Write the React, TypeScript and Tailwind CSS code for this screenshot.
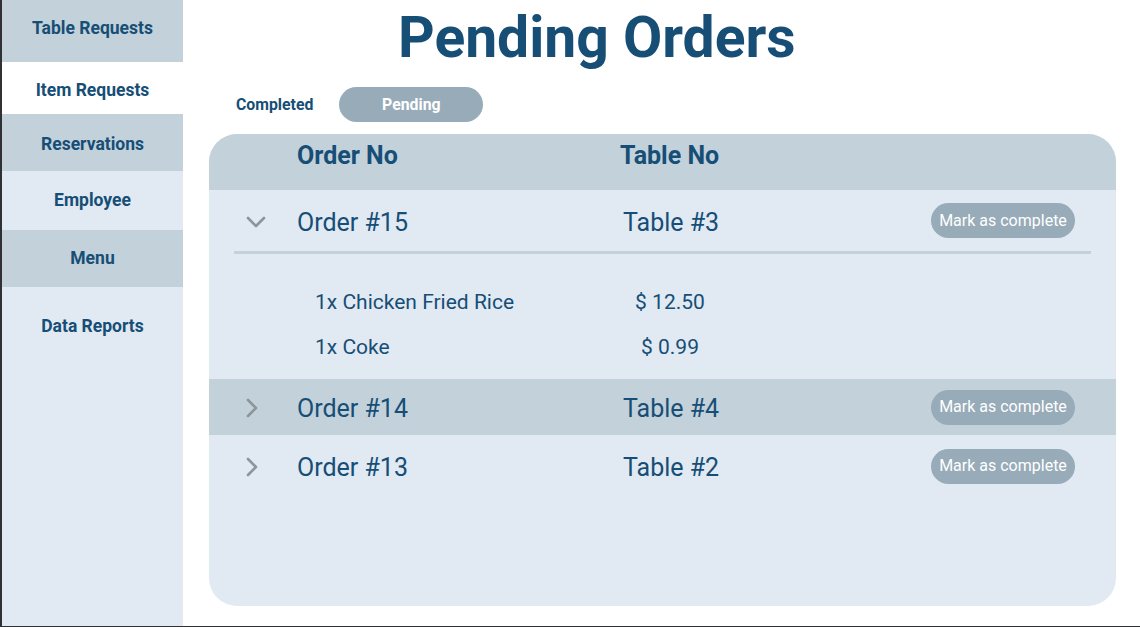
import React from "react";

const navy = "text-[#164e76]";

const nav = [
  { label: "Table Requests", h: "h-[62px]", bg: "bg-[#c3d1da]", pad: "pb-[6px]" },
  { label: "Item Requests", h: "h-[52px]", bg: "bg-white", pad: "pt-[4px]" },
  { label: "Reservations", h: "h-[57px]", bg: "bg-[#c3d1da]", pad: "pt-[3px]" },
  { label: "Employee", h: "h-[59px]", bg: "bg-[#e1e9f3]", pad: "" },
  { label: "Menu", h: "h-[57px]", bg: "bg-[#c3d1da]", pad: "" },
];

function ChevronDown() {
  return (
    <svg width="20" height="12" viewBox="0 0 20 12" fill="none" stroke="#8c959c" strokeWidth="2.6" strokeLinecap="round" strokeLinejoin="round">
      <path d="M2 2l8 8 8-8" />
    </svg>
  );
}

function ChevronRight() {
  return (
    <svg width="12" height="20" viewBox="0 0 12 20" fill="none" stroke="#8c959c" strokeWidth="2.6" strokeLinecap="round" strokeLinejoin="round">
      <path d="M2 2l8 8-8 8" />
    </svg>
  );
}

function CompleteButton() {
  return (
    <button className="h-[35px] w-[144px] rounded-full bg-[#97abb9] text-white text-[16px] leading-none">
      Mark as complete
    </button>
  );
}

function OrderRow({
  order,
  table,
  open,
  bg,
  h,
}: {
  order: string;
  table: string;
  open?: boolean;
  bg: string;
  h: string;
}) {
  return (
    <div className={`flex items-center ${h} ${bg}`}>
      <div className="w-[88px] pl-[37px] pt-[2px] flex items-center">
        {open ? <ChevronDown /> : <ChevronRight />}
      </div>
      <div className={`w-[326px] pt-[4px] text-[25px] ${navy}`}>{order}</div>
      <div className={`flex-1 pt-[4px] text-[25px] ${navy}`}>{table}</div>
      <div className="pr-[41px]">
        <CompleteButton />
      </div>
    </div>
  );
}

export default function App() {
  return (
    <div
      className="h-[627px] w-[1140px] flex bg-white border-l-2 border-b border-[#2f3135] overflow-hidden"
      style={{ fontFamily: "Roboto, 'Noto Sans', sans-serif" }}
    >
      {/* Sidebar */}
      <aside className="w-[181px] flex flex-col bg-[#e1e9f3]">
        {nav.map((n) => (
          <div key={n.label} className={`${n.h} ${n.bg} ${n.pad} flex items-center justify-center font-bold text-[17.5px] ${navy}`}>
            {n.label}
          </div>
        ))}
        <div className={`pt-[26px] text-center font-bold text-[17.5px] ${navy}`}>Data Reports</div>
      </aside>

      {/* Main */}
      <main className="flex-1 flex flex-col">
        <h1 className={`mt-[6px] pl-[215px] text-[57px] leading-[64px] font-bold ${navy}`}>Pending Orders</h1>

        <div className="mt-[17px] flex items-center pl-[53px] gap-[26px]">
          <span className={`font-bold text-[15.8px] ${navy}`}>Completed</span>
          <span className="h-[35px] w-[144px] rounded-full bg-[#97abb9] flex items-center justify-center font-bold text-[15.8px] text-white">
            Pending
          </span>
        </div>

        <section className="mt-[12px] ml-[26px] mr-[24px] h-[472px] rounded-[28px] bg-[#e1e9f3] overflow-hidden">
          <div className="h-[56px] flex items-start pt-[7px] bg-[#c3d1da] font-bold text-[25px] leading-[30px]">
            <div className={`pl-[88px] w-[411px] ${navy}`}>Order No</div>
            <div className={navy}>Table No</div>
          </div>

          <OrderRow order="Order #15" table="Table #3" open bg="bg-[#e1e9f3]" h="h-[61px]" />
          <div className="mx-[25px] h-[3px] bg-[#c3d1da]" />

          <div className={`pt-[36px] pb-[19px] flex flex-col gap-[20px] text-[21px] leading-[25px] ${navy}`}>
            <div className="flex">
              <div className="pl-[106px] w-[376px]">1x Chicken Fried Rice</div>
              <div className="w-[170px] text-center">$ 12.50</div>
            </div>
            <div className="flex">
              <div className="pl-[106px] w-[376px]">1x Coke</div>
              <div className="w-[170px] text-center">$ 0.99</div>
            </div>
          </div>

          <OrderRow order="Order #14" table="Table #4" bg="bg-[#c3d1da]" h="h-[56px]" />
          <OrderRow order="Order #13" table="Table #2" bg="bg-[#e1e9f3]" h="h-[62px]" />
        </section>
      </main>
    </div>
  );
}
